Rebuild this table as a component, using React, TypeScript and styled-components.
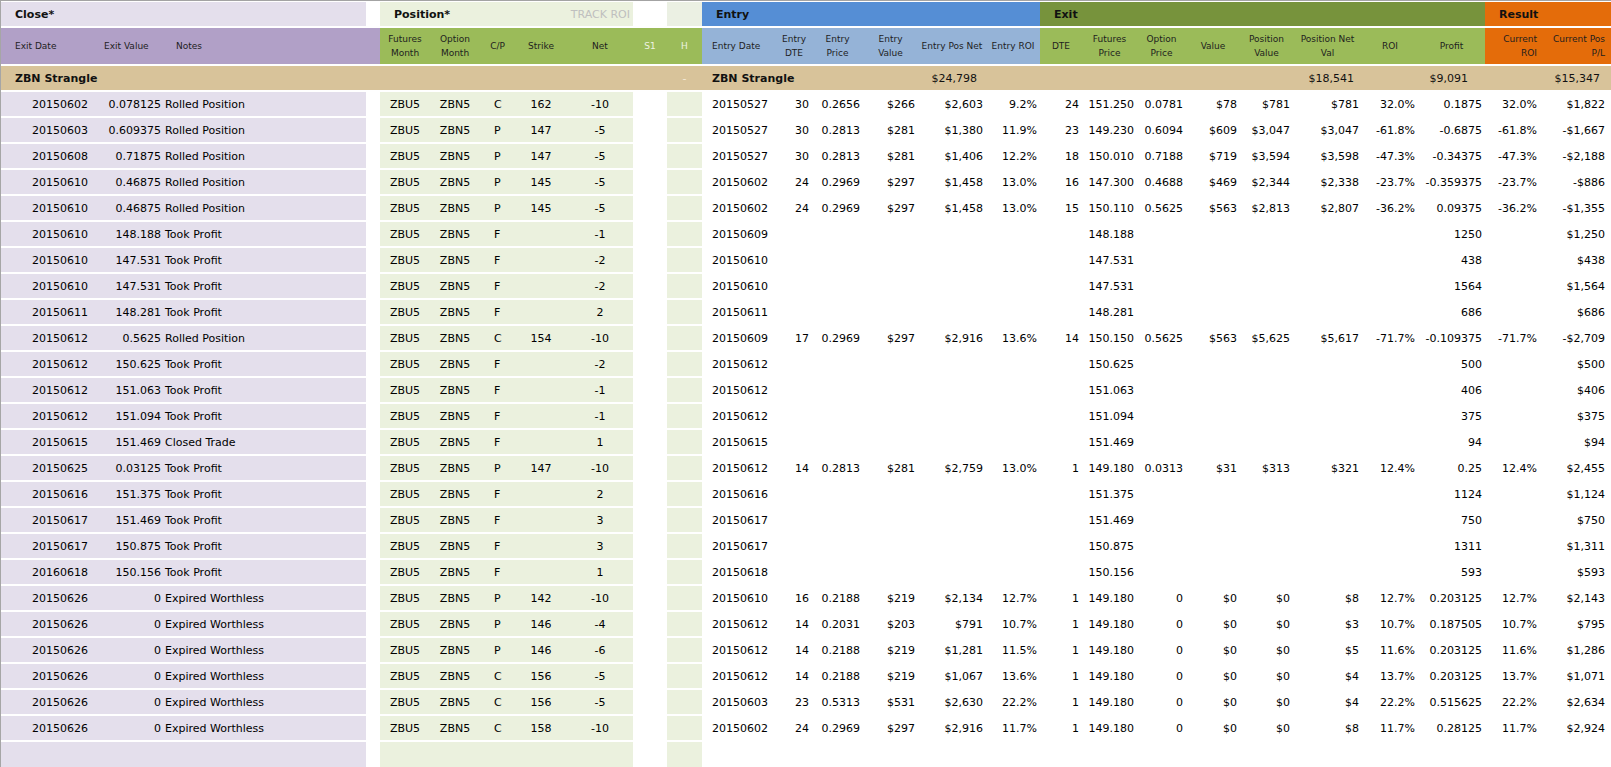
import styled, { createGlobalStyle } from 'styled-components';

const GlobalStyle = createGlobalStyle`
  html, body {
    margin: 0;
    padding: 0;
    background: #ffffff;
  }
  body {
    font-family: 'DejaVu Sans', Verdana, sans-serif;
    color: #000000;
  }
  * {
    box-sizing: border-box;
  }
`;

type Tone = 'close' | 'gap' | 'pos' | 's1' | 'h' | 'entry' | 'exit' | 'result';
type Align = 'left' | 'center' | 'right';

const PALETTE: Record<Tone, { title: string; head: string; body: string }> = {
  close: { title: '#e4dfec', head: '#b1a0c7', body: '#e4dfec' },
  gap: { title: '#ffffff', head: '#b1a0c7', body: '#ffffff' },
  pos: { title: '#ebf1de', head: '#9bbb59', body: '#ebf1de' },
  s1: { title: '#ffffff', head: '#9bbb59', body: '#ffffff' },
  h: { title: '#ebf0e3', head: '#9bbb59', body: '#ebf1de' },
  entry: { title: '#558ed5', head: '#95b3d7', body: '#ffffff' },
  exit: { title: '#77933c', head: '#9bbb59', body: '#ffffff' },
  result: { title: '#e46c0a', head: '#e46c0a', body: '#ffffff' },
};

const FLEX: Record<Align, string> = {
  left: 'flex-start',
  center: 'center',
  right: 'flex-end',
};

type Column = {
  tone: Tone;
  width: number;
  label?: string[];
  headAlign?: Align;
  headPad?: number;
  lightHead?: boolean;
  field?: number;
  align?: Align;
  pad?: number;
};

// field = index into a trade row below
const COLUMNS: Column[] = [
  { tone: 'close', width: 91, label: ['Exit Date'], headAlign: 'left', headPad: 14, field: 0, align: 'right', pad: 4 },
  { tone: 'close', width: 72, label: ['Exit Value'], headAlign: 'left', headPad: 12, field: 1, align: 'right', pad: 3 },
  { tone: 'close', width: 202, label: ['Notes'], headAlign: 'left', headPad: 12, field: 2, align: 'left', pad: 1 },
  { tone: 'gap', width: 14 },
  { tone: 'pos', width: 50, label: ['Futures', 'Month'], field: 3, align: 'center' },
  { tone: 'pos', width: 50, label: ['Option', 'Month'], field: 4, align: 'center' },
  { tone: 'pos', width: 35, label: ['C/P'], field: 5, align: 'left', pad: 14 },
  { tone: 'pos', width: 52, label: ['Strike'], field: 6, align: 'center' },
  { tone: 'pos', width: 66, label: ['Net'], field: 7, align: 'center' },
  { tone: 's1', width: 34, label: ['S1'], lightHead: true },
  { tone: 'h', width: 35, label: ['H'], lightHead: true },
  { tone: 'entry', width: 74, label: ['Entry Date'], headAlign: 'left', headPad: 10, field: 8, align: 'left', pad: 10 },
  { tone: 'entry', width: 36, label: ['Entry', 'DTE'], field: 9 },
  { tone: 'entry', width: 51, label: ['Entry', 'Price'], field: 10 },
  { tone: 'entry', width: 55, label: ['Entry', 'Value'], field: 11 },
  { tone: 'entry', width: 68, label: ['Entry Pos Net'], field: 12 },
  { tone: 'entry', width: 54, label: ['Entry ROI'], field: 13 },
  { tone: 'exit', width: 42, label: ['DTE'], field: 14 },
  { tone: 'exit', width: 55, label: ['Futures', 'Price'], field: 15 },
  { tone: 'exit', width: 49, label: ['Option', 'Price'], field: 16 },
  { tone: 'exit', width: 54, label: ['Value'], field: 17 },
  { tone: 'exit', width: 53, label: ['Position', 'Value'], field: 18 },
  { tone: 'exit', width: 69, label: ['Position Net', 'Val'], field: 19 },
  { tone: 'exit', width: 56, label: ['ROI'], field: 20 },
  { tone: 'exit', width: 67, label: ['Profit'], field: 21 },
  { tone: 'result', width: 55, label: ['Current', 'ROI'], headAlign: 'right', headPad: 3, field: 22 },
  { tone: 'result', width: 71, label: ['Current Pos', 'P/L'], headAlign: 'right', headPad: 6, field: 23, pad: 6 },
];

const TEMPLATE = COLUMNS.map((c) => `${c.width}px`).join(' ');

const SECTIONS: { tone: Tone; span: number; title?: string; note?: string }[] = [
  { tone: 'close', span: 3, title: 'Close*' },
  { tone: 'gap', span: 1 },
  { tone: 'pos', span: 5, title: 'Position*', note: 'TRACK ROI' },
  { tone: 's1', span: 1 },
  { tone: 'h', span: 1 },
  { tone: 'entry', span: 6, title: 'Entry' },
  { tone: 'exit', span: 8, title: 'Exit' },
  { tone: 'result', span: 2, title: 'Result' },
];

const SUMMARY: { span: number; text?: string; bold?: boolean; faint?: boolean; align?: Align; pad?: number }[] = [
  { span: 3, text: 'ZBN Strangle', bold: true, pad: 14 },
  { span: 7 },
  { span: 1, text: '-', faint: true, align: 'center' },
  { span: 4, text: 'ZBN Strangle', bold: true, pad: 10 },
  { span: 1, text: '$24,798', align: 'right', pad: 9 },
  { span: 6 },
  { span: 1, text: '$18,541', align: 'right', pad: 8 },
  { span: 1 },
  { span: 1, text: '$9,091', align: 'right', pad: 17 },
  { span: 1 },
  { span: 1, text: '$15,347', align: 'right', pad: 11 },
];

const rolled = (
  exitDate: string,
  exitValue: string,
  notes: string,
  cp: string,
  strike: string,
  net: string,
  entryDate: string,
  rest: string[],
) => [exitDate, exitValue, notes, 'ZBU5', 'ZBN5', cp, strike, net, entryDate, ...rest];

const future = (
  exitDate: string,
  price: string,
  notes: string,
  net: string,
  entryDate: string,
  profit: string,
  pl: string,
) => [
  exitDate, price, notes, 'ZBU5', 'ZBN5', 'F', '', net, entryDate,
  '', '', '', '', '', '', price, '', '', '', '', '', profit, '', pl,
];

const TRADES: string[][] = [
  rolled('20150602', '0.078125', 'Rolled Position', 'C', '162', '-10', '20150527',
    ['30', '0.2656', '$266', '$2,603', '9.2%', '24', '151.250', '0.0781', '$78', '$781', '$781', '32.0%', '0.1875', '32.0%', '$1,822']),
  rolled('20150603', '0.609375', 'Rolled Position', 'P', '147', '-5', '20150527',
    ['30', '0.2813', '$281', '$1,380', '11.9%', '23', '149.230', '0.6094', '$609', '$3,047', '$3,047', '-61.8%', '-0.6875', '-61.8%', '-$1,667']),
  rolled('20150608', '0.71875', 'Rolled Position', 'P', '147', '-5', '20150527',
    ['30', '0.2813', '$281', '$1,406', '12.2%', '18', '150.010', '0.7188', '$719', '$3,594', '$3,598', '-47.3%', '-0.34375', '-47.3%', '-$2,188']),
  rolled('20150610', '0.46875', 'Rolled Position', 'P', '145', '-5', '20150602',
    ['24', '0.2969', '$297', '$1,458', '13.0%', '16', '147.300', '0.4688', '$469', '$2,344', '$2,338', '-23.7%', '-0.359375', '-23.7%', '-$886']),
  rolled('20150610', '0.46875', 'Rolled Position', 'P', '145', '-5', '20150602',
    ['24', '0.2969', '$297', '$1,458', '13.0%', '15', '150.110', '0.5625', '$563', '$2,813', '$2,807', '-36.2%', '0.09375', '-36.2%', '-$1,355']),
  future('20150610', '148.188', 'Took Profit', '-1', '20150609', '1250', '$1,250'),
  future('20150610', '147.531', 'Took Profit', '-2', '20150610', '438', '$438'),
  future('20150610', '147.531', 'Took Profit', '-2', '20150610', '1564', '$1,564'),
  future('20150611', '148.281', 'Took Profit', '2', '20150611', '686', '$686'),
  rolled('20150612', '0.5625', 'Rolled Position', 'C', '154', '-10', '20150609',
    ['17', '0.2969', '$297', '$2,916', '13.6%', '14', '150.150', '0.5625', '$563', '$5,625', '$5,617', '-71.7%', '-0.109375', '-71.7%', '-$2,709']),
  future('20150612', '150.625', 'Took Profit', '-2', '20150612', '500', '$500'),
  future('20150612', '151.063', 'Took Profit', '-1', '20150612', '406', '$406'),
  future('20150612', '151.094', 'Took Profit', '-1', '20150612', '375', '$375'),
  future('20150615', '151.469', 'Closed Trade', '1', '20150615', '94', '$94'),
  rolled('20150625', '0.03125', 'Took Profit', 'P', '147', '-10', '20150612',
    ['14', '0.2813', '$281', '$2,759', '13.0%', '1', '149.180', '0.0313', '$31', '$313', '$321', '12.4%', '0.25', '12.4%', '$2,455']),
  future('20150616', '151.375', 'Took Profit', '2', '20150616', '1124', '$1,124'),
  future('20150617', '151.469', 'Took Profit', '3', '20150617', '750', '$750'),
  future('20150617', '150.875', 'Took Profit', '3', '20150617', '1311', '$1,311'),
  future('20160618', '150.156', 'Took Profit', '1', '20150618', '593', '$593'),
  rolled('20150626', '0', 'Expired Worthless', 'P', '142', '-10', '20150610',
    ['16', '0.2188', '$219', '$2,134', '12.7%', '1', '149.180', '0', '$0', '$0', '$8', '12.7%', '0.203125', '12.7%', '$2,143']),
  rolled('20150626', '0', 'Expired Worthless', 'P', '146', '-4', '20150612',
    ['14', '0.2031', '$203', '$791', '10.7%', '1', '149.180', '0', '$0', '$0', '$3', '10.7%', '0.187505', '10.7%', '$795']),
  rolled('20150626', '0', 'Expired Worthless', 'P', '146', '-6', '20150612',
    ['14', '0.2188', '$219', '$1,281', '11.5%', '1', '149.180', '0', '$0', '$0', '$5', '11.6%', '0.203125', '11.6%', '$1,286']),
  rolled('20150626', '0', 'Expired Worthless', 'C', '156', '-5', '20150612',
    ['14', '0.2188', '$219', '$1,067', '13.6%', '1', '149.180', '0', '$0', '$0', '$4', '13.7%', '0.203125', '13.7%', '$1,071']),
  rolled('20150626', '0', 'Expired Worthless', 'C', '156', '-5', '20150603',
    ['23', '0.5313', '$531', '$2,630', '22.2%', '1', '149.180', '0', '$0', '$0', '$4', '22.2%', '0.515625', '22.2%', '$2,634']),
  rolled('20150626', '0', 'Expired Worthless', 'C', '158', '-10', '20150602',
    ['24', '0.2969', '$297', '$2,916', '11.7%', '1', '149.180', '0', '$0', '$0', '$8', '11.7%', '0.28125', '11.7%', '$2,924']),
];

const Sheet = styled.div`
  width: 1611px;
  height: 767px;
  display: flex;
  flex-direction: column;
  overflow: hidden;
  background: #ffffff;
  border-top: 1px solid #a3a3a3;
  border-left: 1px solid #a6a6a6;
  padding-top: 1px;
`;
const GridRow = styled.div`
  display: grid;
  grid-template-columns: ${TEMPLATE};
  flex: none;
`;
const TitleRow = styled(GridRow)`
  height: 26px;
`;
const HeadRow = styled(GridRow)`
  height: 38px;
`;
const SummaryRow = styled(GridRow)`
  height: 26px;
  background: #d8c39a;
  border-bottom: 2px solid #ffffff;
`;
const TradeRow = styled(GridRow)`
  height: 26px;
`;
const TailRow = styled(GridRow)`
  flex: 1;
`;
const SectionTitle = styled.div<{ $tone: Tone; $span: number }>`
  grid-column: span ${({ $span }) => $span};
  background: ${({ $tone }) => PALETTE[$tone].title};
  border-bottom: 2px solid #ffffff;
  display: flex;
  align-items: center;
  justify-content: space-between;
  padding: 0 3px 0 14px;
  font-size: 11px;
  font-weight: bold;
  color: #111111;
  white-space: nowrap;
`;
const TrackNote = styled.span`
  font-weight: normal;
  color: #bfbfbf;
`;
const ColumnHead = styled.div<{ $tone: Tone; $align: Align; $pad: number; $light?: boolean }>`
  background: ${({ $tone }) => PALETTE[$tone].head};
  border-bottom: 2px solid #ffffff;
  display: flex;
  flex-direction: column;
  justify-content: center;
  align-items: ${({ $align }) => FLEX[$align]};
  text-align: ${({ $align }) => $align};
  padding: ${({ $align, $pad }) =>
    $align === 'left' ? `0 0 0 ${$pad}px` : $align === 'right' ? `0 ${$pad}px 0 0` : '0'};
  font-size: 9px;
  line-height: 14px;
  color: ${({ $light }) => ($light ? '#eef3e2' : '#1e1e1e')};
  white-space: nowrap;
`;
const SummaryCell = styled.div<{ $span: number; $align: Align; $pad: number; $bold?: boolean; $faint?: boolean }>`
  grid-column: span ${({ $span }) => $span};
  display: flex;
  align-items: center;
  justify-content: ${({ $align }) => FLEX[$align]};
  padding: ${({ $align, $pad }) =>
    $align === 'right' ? `0 ${$pad}px 0 0` : `0 0 0 ${$pad}px`};
  font-size: 11px;
  font-weight: ${({ $bold }) => ($bold ? 'bold' : 'normal')};
  color: ${({ $faint }) => ($faint ? '#f4ead8' : '#111111')};
  white-space: nowrap;
`;
const Cell = styled.div<{ $tone: Tone; $align: Align; $pad: number }>`
  background: ${({ $tone }) => PALETTE[$tone].body};
  border-bottom: 2px solid #ffffff;
  display: flex;
  align-items: center;
  justify-content: ${({ $align }) => FLEX[$align]};
  padding: ${({ $align, $pad }) =>
    $align === 'right' ? `0 ${$pad}px 0 0` : $align === 'left' ? `0 0 0 ${$pad}px` : '0'};
  font-size: 11px;
  color: #000000;
  white-space: nowrap;
`;
const Blank = styled.div<{ $tone: Tone }>`
  background: ${({ $tone }) => PALETTE[$tone].body};
`;

export default function App() {
  return (
    <>
      <GlobalStyle />
      <Sheet>
        <TitleRow>
          {SECTIONS.map((s, i) => (
            <SectionTitle key={i} $tone={s.tone} $span={s.span}>
              <span>{s.title}</span>
              {s.note && <TrackNote>{s.note}</TrackNote>}
            </SectionTitle>
          ))}
        </TitleRow>
        <HeadRow>
          {COLUMNS.map((c, i) => (
            <ColumnHead
              key={i}
              $tone={c.tone}
              $align={c.headAlign ?? 'center'}
              $pad={c.headPad ?? 0}
              $light={c.lightHead}
            >
              {c.label?.map((line) => <span key={line}>{line}</span>)}
            </ColumnHead>
          ))}
        </HeadRow>
        <SummaryRow>
          {SUMMARY.map((s, i) => (
            <SummaryCell
              key={i}
              $span={s.span}
              $align={s.align ?? 'left'}
              $pad={s.pad ?? 0}
              $bold={s.bold}
              $faint={s.faint}
            >
              {s.text}
            </SummaryCell>
          ))}
        </SummaryRow>
        {TRADES.map((trade, r) => (
          <TradeRow key={r}>
            {COLUMNS.map((c, i) => (
              <Cell key={i} $tone={c.tone} $align={c.align ?? 'right'} $pad={c.pad ?? 3}>
                {c.field !== undefined ? trade[c.field] : ''}
              </Cell>
            ))}
          </TradeRow>
        ))}
        <TailRow>
          {COLUMNS.map((c, i) => (
            <Blank key={i} $tone={c.tone} />
          ))}
        </TailRow>
      </Sheet>
    </>
  );
}
